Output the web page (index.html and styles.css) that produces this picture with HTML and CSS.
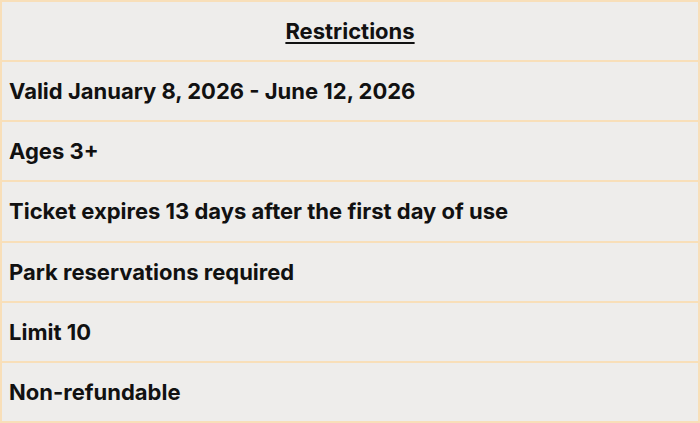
FILE: index.html
```html
<!DOCTYPE html>
<html>
<head>
<meta charset="utf-8">
<link rel="stylesheet" href="styles.css">
</head>
<body>
<div class="table">
  <div class="row head"><span class="title">Restrictions</span></div>
  <div class="row">Valid January 8, 2026 - June 12, 2026</div>
  <div class="row">Ages 3+</div>
  <div class="row">Ticket expires 13 days after the first day of use</div>
  <div class="row">Park reservations required</div>
  <div class="row">Limit 10</div>
  <div class="row">Non-refundable</div>
</div>
</body>
</html>
```
FILE: styles.css
```css
html, body { margin: 0; padding: 0; }
body { background: #eeedeb; width: 700px; height: 423px; overflow: hidden; }
.table {
  box-sizing: border-box;
  height: 423px;
  display: flex;
  flex-direction: column;
  border: 2px solid #f8dfb9;
  border-bottom: none;
  font-family: Inter, "Liberation Sans", sans-serif;
  font-weight: 700;
  font-size: 22px;
  color: #111;
}
.row {
  flex: 1;
  display: flex;
  align-items: center;
  padding-left: 7px;
  border-bottom: 2px solid #f8dfb9;
}
.head { justify-content: center; padding-left: 0; }
.title { text-decoration: underline; text-underline-offset: 3px; text-decoration-thickness: 2px; }
```
